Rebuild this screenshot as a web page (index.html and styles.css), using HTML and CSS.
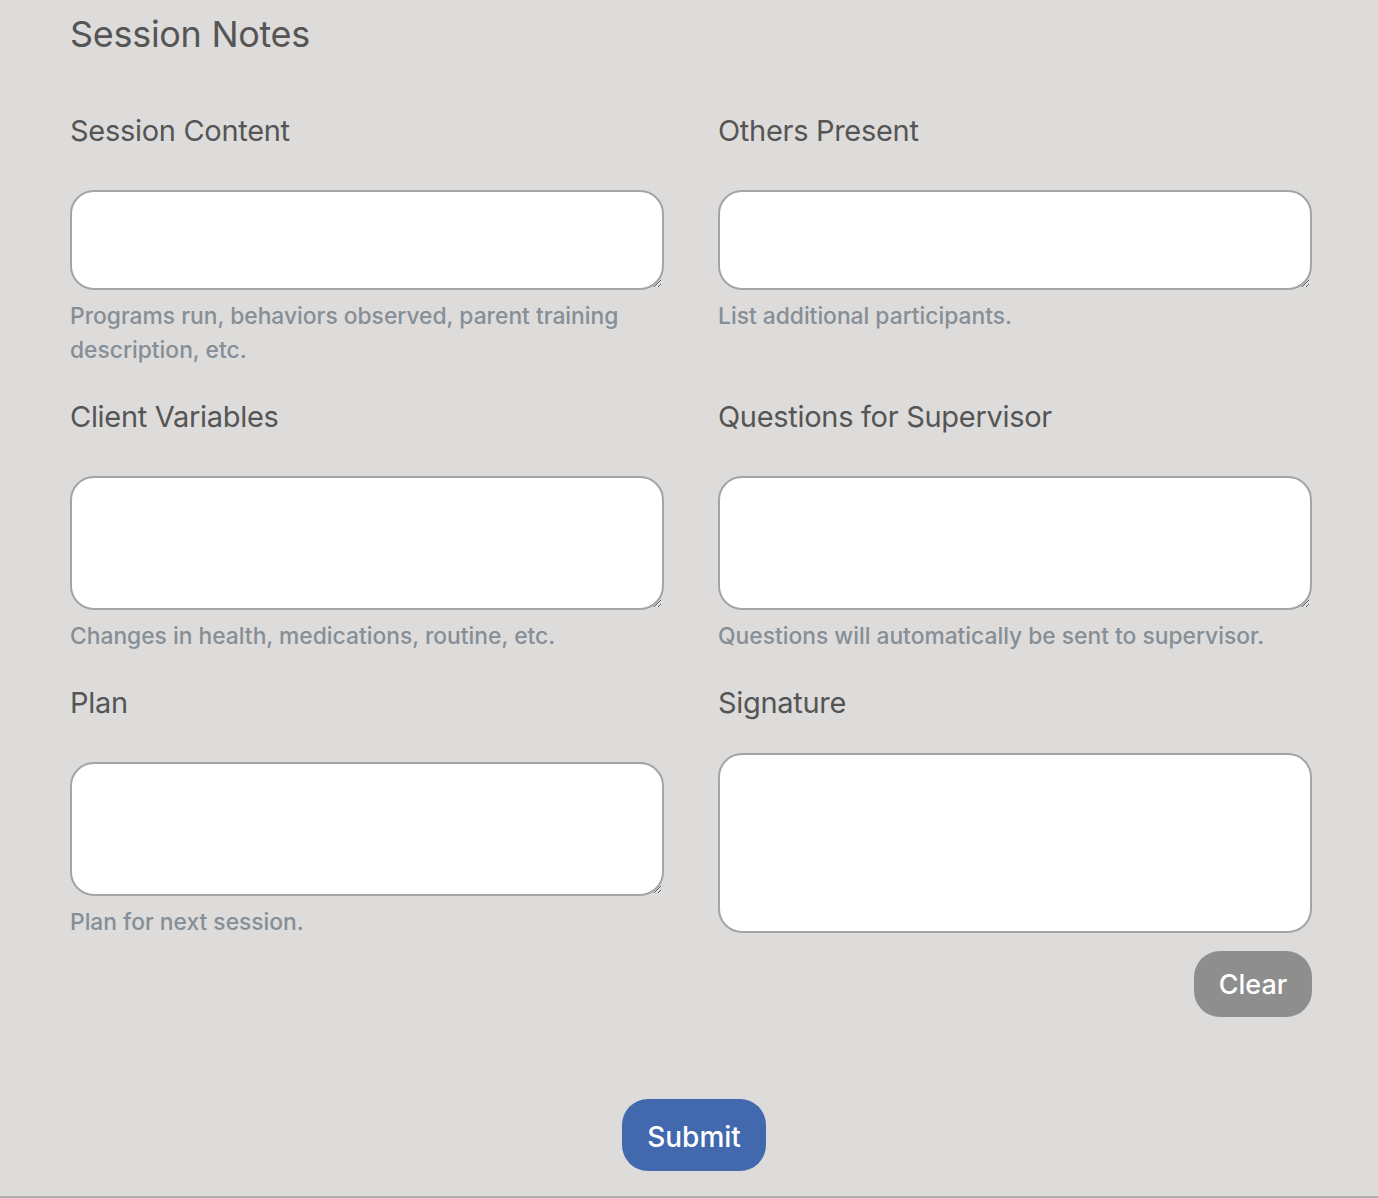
FILE: index.html
```html
<!DOCTYPE html>
<html lang="en">
<head>
    <meta charset="UTF-8">
    <meta name="viewport" content="width=device-width, initial-scale=1.0">
    <title>Session Notes</title>
    <link rel="stylesheet" href="styles.css">
</head>
<body>
    <div class="page">
        <h1 class="page-title">Session Notes</h1>
        <form id="notes-form">
            <div class="form-grid">
                <div class="form-group">
                    <label for="session-content">Session Content</label>
                    <textarea id="session-content" class="notes-box"></textarea>
                    <p class="help">Programs run, behaviors observed, parent training description, etc.</p>
                </div>
                <div class="form-group">
                    <label for="others-present">Others Present</label>
                    <textarea id="others-present" class="notes-box"></textarea>
                    <p class="help">List additional participants.</p>
                </div>
                <div class="form-group">
                    <label for="client-variables">Client Variables</label>
                    <textarea id="client-variables" class="notes-box tall"></textarea>
                    <p class="help">Changes in health, medications, routine, etc.</p>
                </div>
                <div class="form-group">
                    <label for="questions">Questions for Supervisor</label>
                    <textarea id="questions" class="notes-box tall"></textarea>
                    <p class="help">Questions will automatically be sent to supervisor.</p>
                </div>
                <div class="form-group">
                    <label for="plan">Plan</label>
                    <textarea id="plan" class="notes-box tall"></textarea>
                    <p class="help">Plan for next session.</p>
                </div>
                <div class="form-group">
                    <label for="signature">Signature</label>
                    <canvas id="signature" class="signature-pad" width="594" height="180"></canvas>
                    <div class="clear-row">
                        <button type="button" class="btn btn-clear" id="clear-signature">Clear</button>
                    </div>
                </div>
            </div>
            <div class="submit-row">
                <button type="submit" class="btn btn-submit">Submit</button>
            </div>
        </form>
    </div>
    <div class="page-end"></div>
</body>
</html>
```

FILE: styles.css
```css
body {
    margin: 0;
    background-color: #dddcdb;
    font-family: Inter, "Open Sans", sans-serif;
    color: #555;
}

.page {
    width: 1242px;
    height: 1196px;
    padding-left: 70px;
    box-sizing: content-box;
}

.page-title {
    margin: 0;
    padding-top: 10px;
    font-size: 36px;
    line-height: 48px;
    font-weight: 400;
    letter-spacing: -0.3px;
    color: #555;
}

.form-grid {
    display: grid;
    grid-template-columns: 594px 594px;
    column-gap: 54px;
    row-gap: 30px;
    margin-top: 53px;
}

label {
    display: block;
    font-size: 29px;
    line-height: 40px;
    letter-spacing: -0.3px;
    margin-bottom: 39px;
}

.notes-box {
    display: block;
    width: 594px;
    height: 100px;
    margin: 0;
    box-sizing: border-box;
    border: 2px solid #a4a4a4;
    border-radius: 24px;
    background: white;
}

.notes-box.tall {
    height: 134px;
}

.help {
    margin: 9px 0 0;
    font-size: 22.8px;
    line-height: 34px;
    font-weight: 500;
    color: #868e96;
}

.signature-pad {
    display: block;
    width: 594px;
    height: 180px;
    margin-top: -9px;
    box-sizing: border-box;
    border: 2px solid #a4a4a4;
    border-radius: 24px;
    background: white;
}

.clear-row {
    display: flex;
    justify-content: flex-end;
    margin-top: 18px;
}

.btn {
    border: none;
    color: white;
    font-family: Inter, "Open Sans", sans-serif;
    cursor: pointer;
}

.btn-clear {
    width: 118px;
    height: 66px;
    border-radius: 26px;
    background-color: #8e8e8e;
    font-size: 27px;
    font-weight: 500;
}

.submit-row {
    display: flex;
    justify-content: center;
    margin-top: 82px;
    padding-left: 6px;
}

.btn-submit {
    width: 144px;
    height: 72px;
    border-radius: 26px;
    background-color: #4269ae;
    font-size: 28px;
    font-weight: 500;
    padding-top: 4px;
}

.page-end {
    height: 2px;
    background-color: #b0aeb0;
}
```
